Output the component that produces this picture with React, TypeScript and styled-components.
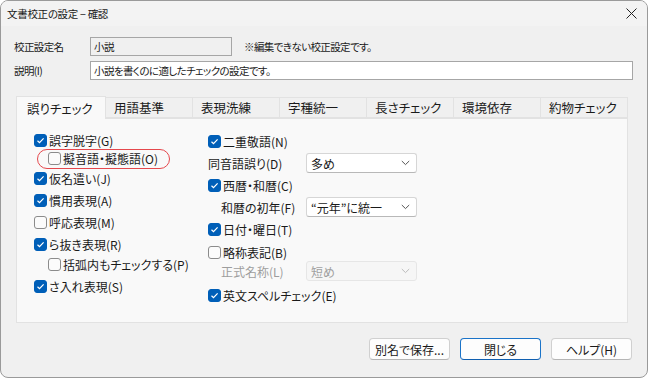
import { styled, createGlobalStyle } from 'styled-components'

const Global = createGlobalStyle`
  html, body {
    margin: 0;
    padding: 0;
    background: #ffffff;
  }
  body {
    font-family: "Noto Sans CJK JP", "Noto Sans", sans-serif;
    font-size: 12px;
    font-feature-settings: "palt";
    color: #1a1a1a;
  }
`

const Window = styled.div`
  box-sizing: border-box;
  width: 648px;
  height: 378px;
  display: flex;
  flex-direction: column;
  background: #f0f0f0;
  border: 1px solid #9a9a9a;
  border-radius: 8px;
  overflow: hidden;
`

const TitleBar = styled.div`
  height: 25px;
  display: flex;
  align-items: center;
  justify-content: space-between;
  padding: 0 10px 0 6px;
  background: #f3f3f3;
  font-size: 10.5px;
  letter-spacing: -0.3px;
`

const Body = styled.div`
  flex: 1;
  display: flex;
  flex-direction: column;
  padding: 10px 14px 0 13px;
`

const FieldRow = styled.div`
  display: flex;
  align-items: center;
  height: 20px;
  margin-bottom: 4px;
  font-size: 10.5px;
  letter-spacing: -0.6px;
`

const FieldLabel = styled.div`
  width: 76px;
  white-space: nowrap;
`

const TextInput = styled.div<{ $disabled?: boolean; $w?: number }>`
  box-sizing: border-box;
  height: 19px;
  width: ${p => (p.$w ? `${p.$w}px` : 'auto')};
  flex: ${p => (p.$w ? 'none' : '1')};
  display: flex;
  align-items: center;
  padding: 0 3px;
  border: 1px solid #a6a6a6;
  background: ${p => (p.$disabled ? '#f0f0f0' : '#ffffff')};
  white-space: nowrap;
`

const Note = styled.div`
  margin-left: 12px;
  white-space: nowrap;
`

const TabStrip = styled.div`
  display: flex;
  margin-top: 12px;
  margin-left: 2px;
  width: 612px;
  height: 22px;
  align-items: flex-end;
  position: relative;
  z-index: 1;
`

const Tab = styled.div<{ $active?: boolean }>`
  box-sizing: border-box;
  flex: 1;
  height: ${p => (p.$active ? '23px' : '21px')};
  margin-bottom: ${p => (p.$active ? '-1px' : '0')};
  display: flex;
  align-items: center;
  padding-left: ${p => (p.$active ? '10px' : '8px')};
  border: 1px solid #e2e2e2;
  border-bottom: ${p => (p.$active ? 'none' : '1px solid #e2e2e2')};
  border-left: ${p => (p.$active ? '1px solid #e2e2e2' : 'none')};
  background: ${p => (p.$active ? '#f9f9f9' : '#f0f0f0')};
  font-size: 12.5px;
  white-space: nowrap;
`

const Panel = styled.div`
  box-sizing: border-box;
  margin-left: 2px;
  width: 612px;
  height: 205px;
  border: 1px solid #e2e2e2;
  background: #f9f9f9;
  display: flex;
  padding: 11px 0 0 17px;
`

const Column = styled.div<{ $w: number }>`
  width: ${p => p.$w}px;
  display: flex;
  flex-direction: column;
`

const Row = styled.div<{ $h: number; $indent?: number; $muted?: boolean }>`
  height: ${p => p.$h}px;
  display: flex;
  align-items: center;
  padding-left: ${p => p.$indent ?? 0}px;
  color: ${p => (p.$muted ? '#9d9d9d' : '#1a1a1a')};
  white-space: nowrap;
  position: relative;
`

const Box = styled.span<{ $on?: boolean }>`
  box-sizing: border-box;
  width: 13px;
  height: 13px;
  border-radius: 3px;
  margin-right: 2px;
  display: inline-flex;
  align-items: center;
  justify-content: center;
  background: ${p => (p.$on ? '#005fb8' : '#fbfbfb')};
  border: 1px solid ${p => (p.$on ? '#005fb8' : '#8b8b8b')};
`

const Highlight = styled.span`
  position: absolute;
  left: 3px;
  top: -1px;
  width: 133px;
  height: 20px;
  box-sizing: border-box;
  border: 1.5px solid #e5484d;
  border-radius: 10px;
  pointer-events: none;
`

const SelLabel = styled.span<{ $w: number }>`
  width: ${p => p.$w}px;
`

const Select = styled.div<{ $disabled?: boolean }>`
  box-sizing: border-box;
  flex: none;
  width: 111px;
  height: 20px;
  display: flex;
  align-items: center;
  justify-content: space-between;
  padding: 0 6px 0 4px;
  border: 1px solid ${p => (p.$disabled ? '#e6e6e6' : '#d6d6d6')};
  border-bottom-color: ${p => (p.$disabled ? '#e6e6e6' : '#b8b8b8')};
  border-radius: 3px;
  background: ${p => (p.$disabled ? '#f6f6f6' : '#ffffff')};
  color: ${p => (p.$disabled ? '#a0a0a0' : '#1a1a1a')};
`

const Footer = styled.div`
  display: flex;
  justify-content: flex-end;
  gap: 10px;
  margin-top: 15px;
  padding-right: 1px;
`

const Button = styled.div<{ $primary?: boolean }>`
  box-sizing: border-box;
  width: 81px;
  height: 22px;
  display: flex;
  align-items: center;
  justify-content: center;
  border: 1px solid ${p => (p.$primary ? '#1a73c8' : '#d0d0d0')};
  border-bottom-color: ${p => (p.$primary ? '#0f5fb0' : '#b5b5b5')};
  border-radius: 4px;
  background: #fdfdfd;
  white-space: nowrap;
`

const Check = ({ on }: { on?: boolean }) => (
  <Box $on={on}>
    {on && (
      <svg width="9" height="9" viewBox="0 0 9 9">
        <path d="M1.5 4.8 L3.5 6.7 L7.6 2.3" fill="none" stroke="#fff" strokeWidth="1.2" />
      </svg>
    )}
  </Box>
)

const Chevron = ({ color }: { color: string }) => (
  <svg width="9" height="6" viewBox="0 0 9 6">
    <path d="M0.8 1 L4.5 4.6 L8.2 1" fill="none" stroke={color} strokeWidth="1" />
  </svg>
)

const tabs = ['誤りチェック', '用語基準', '表現洗練', '字種統一', '長さチェック', '環境依存', '約物チェック']

const App = () => {
  return (
    <Window>
      <Global />
      <TitleBar>
        <span>文書校正の設定 − 確認</span>
        <svg width="11" height="11" viewBox="0 0 11 11">
          <path d="M0.5 0.5 L10.5 10.5 M10.5 0.5 L0.5 10.5" stroke="#222" strokeWidth="1" />
        </svg>
      </TitleBar>
      <Body>
        <FieldRow>
          <FieldLabel>校正設定名</FieldLabel>
          <TextInput $disabled $w={142}>小説</TextInput>
          <Note>※編集できない校正設定です。</Note>
        </FieldRow>
        <FieldRow>
          <FieldLabel>説明(I)</FieldLabel>
          <TextInput>小説を書くのに適したチェックの設定です。</TextInput>
        </FieldRow>

        <TabStrip>
          {tabs.map((t, i) => (
            <Tab key={t} $active={i === 0}>{t}</Tab>
          ))}
        </TabStrip>
        <Panel>
          <Column $w={174}>
            <Row $h={20}><Check on />誤字脱字(G)</Row>
            <Row $h={17} $indent={14}>
              <Highlight />
              <Check />擬音語・擬態語(O)
            </Row>
            <Row $h={22}><Check on />仮名遣い(J)</Row>
            <Row $h={22}><Check on />慣用表現(A)</Row>
            <Row $h={22}><Check on={false} />呼応表現(M)</Row>
            <Row $h={22}><Check on />ら抜き表現(R)</Row>
            <Row $h={19} $indent={14}><Check />括弧内もチェックする(P)</Row>
            <Row $h={24}><Check on />さ入れ表現(S)</Row>
          </Column>
          <Column $w={240}>
            <Row $h={22}><Check on />二重敬語(N)</Row>
            <Row $h={22}>
              <SelLabel $w={98}>同音語誤り(D)</SelLabel>
              <Select>多め<Chevron color="#555" /></Select>
            </Row>
            <Row $h={22}><Check on />西暦・和暦(C)</Row>
            <Row $h={22} $indent={13}>
              <SelLabel $w={85}>和暦の初年(F)</SelLabel>
              <Select>“元年”に統一<Chevron color="#555" /></Select>
            </Row>
            <Row $h={22}><Check on />日付・曜日(T)</Row>
            <Row $h={24}><Check />略称表記(B)</Row>
            <Row $h={14} $indent={13} $muted>
              <SelLabel $w={85}>正式名称(L)</SelLabel>
              <Select $disabled>短め<Chevron color="#bbb" /></Select>
            </Row>
            <Row $h={34}><Check on />英文スペルチェック(E)</Row>
          </Column>
        </Panel>

        <Footer>
          <Button>別名で保存...</Button>
          <Button $primary>閉じる</Button>
          <Button>ヘルプ(H)</Button>
        </Footer>
      </Body>
    </Window>
  )
}

export default App
